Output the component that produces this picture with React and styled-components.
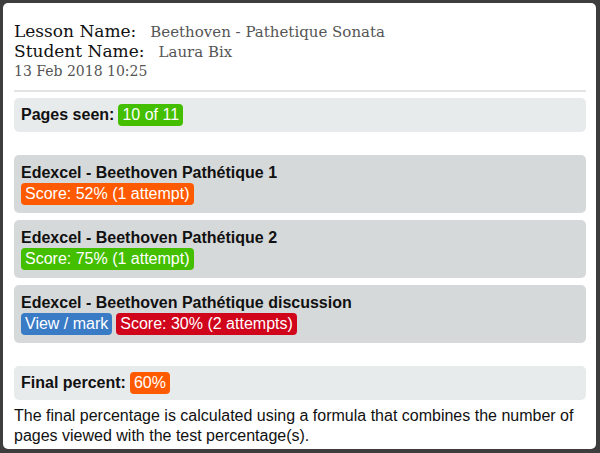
import React from 'react';
import styled, {createGlobalStyle} from "styled-components";

const GlobalStyle = createGlobalStyle`
  html, body {
    margin: 0;
    padding: 0;
    background: #3d3d3d;
  }
  body {
    font-family: "Liberation Sans", Arial, sans-serif;
    color: #111;
  }
`;

const Panel = styled.div`
  margin: 3px 4px 0 3px;
  height: 446px;
  box-sizing: border-box;
  background: #fff;
  border-radius: 5px;
  padding: 18px 10px 0 11px;
  overflow: hidden;
`;

const Header = styled.div`
  font-family: "DejaVu Serif", "Liberation Serif", serif;
  padding-bottom: 9px;
  border-bottom: 2px solid #e2e4e5;
`;

const HeaderLine = styled.div`
  display: flex;
  align-items: baseline;
  height: 20px;
  line-height: 20px;
`;

const Label = styled.span`
  font-size: 17px;
  color: #111;
  margin-right: ${({gap}) => gap || 14}px;
`;

const Value = styled.span`
  font-size: 15px;
  color: #555;
`;

const DateLine = styled.div`
  font-size: 14px;
  color: #555;
  height: 20px;
  line-height: 20px;
`;

const Card = styled.div`
  background: ${({dark}) => (dark ? "#d6d9da" : "#e8ebec")};
  border-radius: 5px;
  padding: ${({dark}) => (dark ? "8px 7px" : "6px 7px")};
  margin-top: ${({top}) => top || 7}px;
`;

const InlineRow = styled.div`
  display: flex;
  align-items: center;
  gap: 4px;
`;

const Strong = styled.span`
  font-weight: bold;
  font-size: 16px;
`;

const Title = styled.div`
  font-weight: bold;
  font-size: 16px;
  line-height: 20px;
`;

const colors = {
  green: "#43bf00",
  orange: "#ff5a00",
  red: "#d0051c",
  blue: "#3a7bc6",
};

const Badge = styled.span`
  display: inline-block;
  background: ${({tone}) => colors[tone]};
  color: #fff;
  font-size: 16px;
  line-height: 22px;
  padding: 0 4px;
  border-radius: 4px;
`;

const Note = styled.p`
  margin: 6px 0 0 0;
  font-size: 16px;
  line-height: 20px;
  color: #111;
`;

const items = [
  {title: "Edexcel - Beethoven Pathétique 1", badges: [{tone: "orange", text: "Score: 52% (1 attempt)"}]},
  {title: "Edexcel - Beethoven Pathétique 2", badges: [{tone: "green", text: "Score: 75% (1 attempt)"}]},
  {
    title: "Edexcel - Beethoven Pathétique discussion",
    badges: [
      {tone: "blue", text: "View / mark"},
      {tone: "red", text: "Score: 30% (2 attempts)"},
    ],
  },
];

const App = () => (
  <>
    <GlobalStyle />
    <Panel>
      <Header>
        <HeaderLine>
          <Label>Lesson Name:</Label>
          <Value>Beethoven - Pathetique Sonata</Value>
        </HeaderLine>
        <HeaderLine>
          <Label gap={14}>Student Name:</Label>
          <Value>Laura Bix</Value>
        </HeaderLine>
        <DateLine>13 Feb 2018 10:25</DateLine>
      </Header>

      <Card top={6}>
        <InlineRow>
          <Strong>Pages seen:</Strong>
          <Badge tone="green">10 of 11</Badge>
        </InlineRow>
      </Card>

      {items.map((item, index) => (
        <Card dark key={index} top={index === 0 ? 23 : 7}>
          <Title>{item.title}</Title>
          <InlineRow>
            {item.badges.map((b, i) => (
              <Badge key={i} tone={b.tone}>{b.text}</Badge>
            ))}
          </InlineRow>
        </Card>
      ))}

      <Card top={23}>
        <InlineRow>
          <Strong>Final percent:</Strong>
          <Badge tone="orange">60%</Badge>
        </InlineRow>
      </Card>

      <Note>
        The final percentage is calculated using a formula that combines the number of pages viewed with the test percentage(s).
      </Note>
    </Panel>
  </>
);

export default App;
